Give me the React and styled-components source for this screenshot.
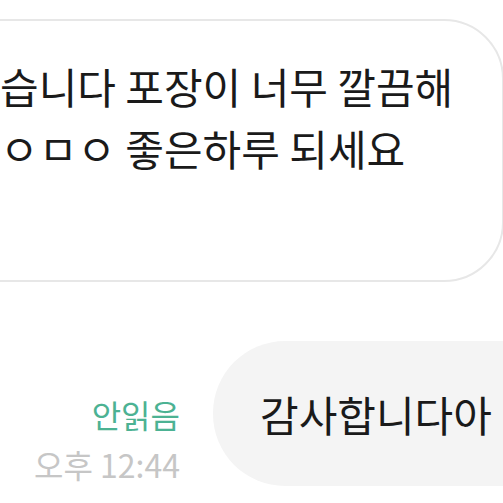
import React from "react";
import styled, { createGlobalStyle } from "styled-components";

const GlobalStyle = createGlobalStyle`
    html, body {
        margin: 0;
        padding: 0;
        background: #ffffff;
    }
    body {
        font-family: "Noto Sans CJK KR", "Noto Sans", sans-serif;
        color: #1e1e1e;
    }
`

function App() {
    return (
        <Screen>
            <GlobalStyle />
            <IncomingBubble>
                <BubbleText>
                    습니다 포장이 너무 깔끔해
                    <br />
                    ㅇㅁㅇ 좋은하루 되세요
                </BubbleText>
            </IncomingBubble>
            <OutgoingRow>
                <Meta>
                    <ReadState>안읽음</ReadState>
                    <Time>오후 12:44</Time>
                </Meta>
                <OutgoingBubble>감사합니다아</OutgoingBubble>
            </OutgoingRow>
        </Screen>
    )
}

const Screen = styled.div`
    width: 503px;
    height: 503px;
    overflow: hidden;
    display: flex;
    flex-direction: column;
    background: #ffffff;
`

const IncomingBubble = styled.div`
    box-sizing: border-box;
    margin-top: 19px;
    margin-left: -60px;
    width: 564px;
    height: 263px;
    border: 2px solid #e7e7e7;
    border-radius: 0 60px 60px 0;
    padding: 34px 0 0 58px;
    background: #ffffff;
`

const BubbleText = styled.p`
    margin: 0;
    font-size: 42px;
    line-height: 62px;
    color: #1a1a1a;
    white-space: nowrap;
`

const OutgoingRow = styled.div`
    display: flex;
    justify-content: flex-end;
    align-items: flex-end;
    gap: 33px;
    margin-top: 59px;
    margin-right: -60px;
`

const Meta = styled.div`
    display: flex;
    flex-direction: column;
    align-items: flex-end;
    gap: 8px;
    padding-bottom: 1px;
    font-size: 32px;
    line-height: 42px;
`

const ReadState = styled.span`
    color: #4cb293;
`

const Time = styled.span`
    color: #c6c6c6;
`

const OutgoingBubble = styled.div`
    box-sizing: border-box;
    display: flex;
    align-items: center;
    flex-shrink: 0;
    width: 350px;
    height: 145px;
    padding: 0 0 0 47px;
    border-radius: 72px 0 0 72px;
    background: #f4f4f4;
    font-size: 42px;
    color: #1a1a1a;
    white-space: nowrap;
`

export default App;
